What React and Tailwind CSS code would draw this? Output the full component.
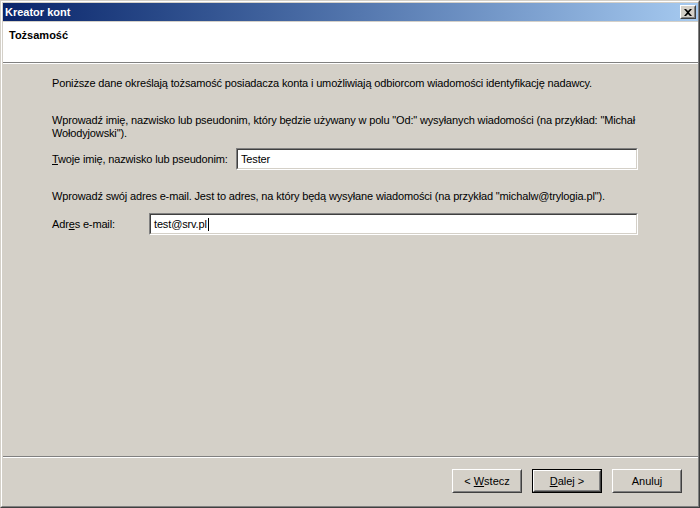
import React from "react";

const font = { fontFamily: '"Liberation Sans", Arial, sans-serif' };

function Button({ children, isDefault }) {
  const inner = (
    <div className="border border-t-white border-l-white border-b-[#404040] border-r-[#404040] w-full h-full">
      <div className="border border-t-[#d4d0c8] border-l-[#d4d0c8] border-b-[#808080] border-r-[#808080] w-full h-full flex items-center justify-center text-[11px] text-black">
        <span className="whitespace-pre">{children}</span>
      </div>
    </div>
  );
  return (
    <div className={`w-[70px] h-[24px] ${isDefault ? "border border-black" : ""}`}>
      {inner}
    </div>
  );
}

function Input({ children, className }) {
  return (
    <div className={`border border-t-[#808080] border-l-[#808080] border-b-white border-r-white h-[22px] ${className}`}>
      <div className="border border-t-[#404040] border-l-[#404040] border-b-[#d4d0c8] border-r-[#d4d0c8] bg-white h-full flex items-center pl-[3px] text-[11px] text-black">
        {children}
      </div>
    </div>
  );
}

export default function App() {
  return (
    <div
      style={font}
      className="w-[700px] h-[508px] bg-[#d4d0c8] border border-t-[#d4d0c8] border-l-[#d4d0c8] border-b-[#404040] border-r-[#404040] overflow-hidden"
    >
      <div className="w-full h-full border border-t-white border-l-white border-b-[#808080] border-r-[#808080] pt-px pl-px flex flex-col">
        {/* Title bar */}
        <div className="h-[18px] flex items-center justify-between bg-gradient-to-r from-[#0a246a] to-[#a6caf0] pl-[2px] pr-[2px]">
          <span className="text-white font-bold text-[11px] leading-none">Kreator kont</span>
          <div className="w-[16px] h-[14px] border border-t-white border-l-white border-b-[#404040] border-r-[#404040]">
            <div className="w-full h-full border border-t-[#d4d0c8] border-l-[#d4d0c8] border-b-[#808080] border-r-[#808080] bg-[#d4d0c8] flex items-center justify-center">
              <svg width="8" height="7" viewBox="0 0 8 7">
                <path d="M0 0h2l2 2 2-2h2L5 3.5 8 7H6L4 5 2 7H0l3-3.5z" fill="black" />
              </svg>
            </div>
          </div>
        </div>
        <div className="h-px" />
        {/* Header */}
        <div className="h-[40px] bg-white pl-[6px] pt-[5px] leading-[13px]">
          <span className="font-bold text-[11px] text-black">Tożsamość</span>
        </div>
        <div className="h-px bg-[#808080]" />
        <div className="h-px bg-white" />
        {/* Body */}
        <div className="flex-1 flex flex-col pl-[49px] text-[11px] leading-[13px] tracking-[-0.15px] text-black">
          <p className="mt-[13px]">
            Poniższe dane określają tożsamość posiadacza konta i umożliwiają odbiorcom wiadomości identyfikację nadawcy.
          </p>
          <p className="mt-[24px] w-[600px]">
            Wprowadź imię, nazwisko lub pseudonim, który będzie używany w polu "Od:" wysyłanych wiadomości (na przykład: "Michał Wołodyjowski").
          </p>
          <div className="mt-[8px] flex items-center">
            <span className="w-[184px]">
              <u>T</u>woje imię, nazwisko lub pseudonim:
            </span>
            <Input className="w-[402px]">Tester</Input>
          </div>
          <p className="mt-[20px]">
            Wprowadź swój adres e-mail. Jest to adres, na który będą wysyłane wiadomości (na przykład "michalw@trylogia.pl").
          </p>
          <div className="mt-[10px] flex items-center">
            <span className="w-[97px]">
              Adr<u>e</u>s e-mail:
            </span>
            <Input className="w-[489px]">
              <span>test@srv.pl</span>
              <span className="inline-block w-px h-[13px] bg-black ml-px" />
            </Input>
          </div>
        </div>
        <div className="h-px bg-[#808080]" />
        <div className="h-px bg-white" />
        <div className="h-[48px] flex items-start justify-end gap-[10px] pr-[16px] pt-[11px]">
          <Button>
            {"< "}<u>W</u>stecz
          </Button>
          <Button isDefault>
            <u>D</u>alej {">"}
          </Button>
          <Button>Anuluj</Button>
        </div>
      </div>
    </div>
  );
}
